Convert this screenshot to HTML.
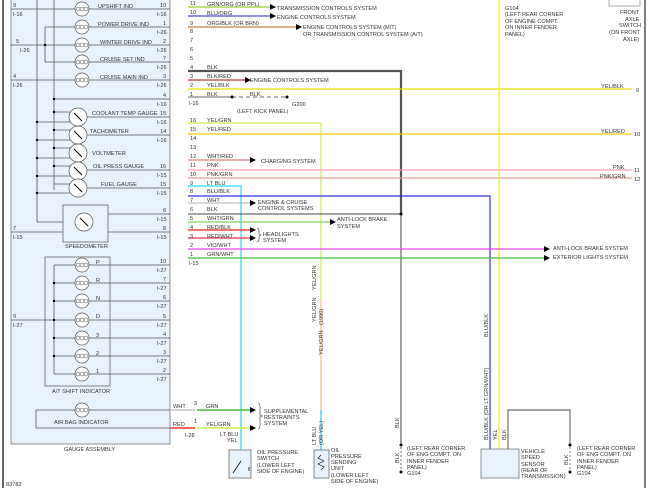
<!DOCTYPE html>
<html><head><meta charset="utf-8"><style>
html,body{margin:0;padding:0;background:#fff;}
svg{display:block;}
text{font-family:"Liberation Sans",sans-serif;font-size:5.6px;fill:#333;}
.n{font-size:5.8px}
</style></head><body>
<svg width="650" height="488" viewBox="0 0 650 488" xmlns="http://www.w3.org/2000/svg">
<defs>
<marker id="ah" markerWidth="6" markerHeight="6" refX="5" refY="3" orient="auto" markerUnits="userSpaceOnUse"><path d="M0,0L6,3L0,6z" fill="#000"/></marker>
<g id="bulb"><circle r="7" fill="#fff" stroke="#555" stroke-width="0.7"/><circle cx="-4" r="2" fill="none" stroke="#555" stroke-width="0.5"/><circle cx="4" r="2" fill="none" stroke="#555" stroke-width="0.5"/><circle r="2" fill="none" stroke="#555" stroke-width="0.5"/></g>
<g id="gauge"><circle r="9" fill="#fff" stroke="#555" stroke-width="0.7"/><line x1="-4" y1="-4" x2="4" y2="4" stroke="#000" stroke-width="1"/></g>
</defs>
<rect width="650" height="488" fill="#fff"/>
<line x1="3" y1="0" x2="3" y2="488" stroke="#000" stroke-width="1.2"/>
<line x1="645" y1="0" x2="645" y2="488" stroke="#555" stroke-width="1.5"/>
<!-- gauge assembly -->
<rect x="11" y="-2" width="159" height="446" fill="#e9f2fb" stroke="#777" stroke-width="0.8"/>
<text x="64" y="451">GAUGE ASSEMBLY</text>
<g stroke="#555" stroke-width="0.8" fill="none">
<line x1="37" y1="0" x2="37" y2="222"/>
<line x1="54" y1="0" x2="54" y2="190"/>
<line x1="45" y1="27" x2="45" y2="62"/>
<line x1="37" y1="222" x2="63" y2="222"/>
<!-- rows -->
<line x1="11" y1="9" x2="170" y2="9"/>
<line x1="45" y1="27" x2="170" y2="27"/>
<line x1="11" y1="45" x2="170" y2="45"/>
<line x1="45" y1="62" x2="170" y2="62"/>
<line x1="11" y1="80" x2="170" y2="80"/>
<line x1="54" y1="99" x2="170" y2="99"/>
<line x1="87" y1="117" x2="170" y2="117"/>
<line x1="87" y1="135" x2="170" y2="135"/>
<line x1="87" y1="170" x2="170" y2="170"/>
<line x1="87" y1="188" x2="170" y2="188"/>
<line x1="108" y1="214" x2="170" y2="214"/>
<line x1="11" y1="232" x2="170" y2="232"/>
<line x1="54" y1="112" x2="72" y2="112"/><line x1="37" y1="122" x2="72" y2="122"/>
<line x1="54" y1="130" x2="72" y2="130"/><line x1="37" y1="140" x2="72" y2="140"/>
<line x1="54" y1="148" x2="72" y2="148"/><line x1="37" y1="158" x2="72" y2="158"/>
<line x1="54" y1="166" x2="72" y2="166"/><line x1="37" y1="176" x2="72" y2="176"/>
<line x1="54" y1="184" x2="72" y2="184"/><line x1="37" y1="193" x2="72" y2="193"/>
<!-- AT -->
<line x1="54" y1="265" x2="54" y2="374"/>
<line x1="54" y1="265" x2="170" y2="265"/><line x1="54" y1="283" x2="170" y2="283"/><line x1="54" y1="301" x2="170" y2="301"/><line x1="11" y1="320" x2="170" y2="320"/><line x1="54" y1="338" x2="170" y2="338"/><line x1="54" y1="356" x2="170" y2="356"/><line x1="54" y1="374" x2="170" y2="374"/>
<!-- airbag -->
<polyline points="195,410 36,410 36,428 195,428"/>
</g>
<g fill="#000">
<circle cx="45" cy="45" r="1.2"/><circle cx="54" cy="99" r="1.2"/><circle cx="54" cy="112" r="1.2"/><circle cx="54" cy="130" r="1.2"/><circle cx="54" cy="148" r="1.2"/><circle cx="54" cy="166" r="1.2"/>
<circle cx="37" cy="122" r="1.2"/><circle cx="37" cy="140" r="1.2"/><circle cx="37" cy="158" r="1.2"/><circle cx="37" cy="176" r="1.2"/><circle cx="37" cy="193" r="1.2"/>
<circle cx="54" cy="283" r="1.2"/><circle cx="54" cy="301" r="1.2"/><circle cx="54" cy="320" r="1.2"/><circle cx="54" cy="338" r="1.2"/><circle cx="54" cy="356" r="1.2"/>
</g>
<use href="#bulb" x="82" y="9"/><use href="#bulb" x="82" y="27"/><use href="#bulb" x="82" y="45"/><use href="#bulb" x="82" y="62"/><use href="#bulb" x="82" y="80"/>
<text x="98" y="8">UPSHIFT IND</text><text x="98" y="26">POWER DRIVE IND</text><text x="100" y="44">WINTER DRIVE IND</text><text x="100" y="61">CRUISE SET IND</text><text x="100" y="79">CRUISE MAIN IND</text>
<use href="#gauge" x="78" y="117"/><use href="#gauge" x="78" y="135"/><use href="#gauge" x="78" y="153"/><use href="#gauge" x="78" y="171"/><use href="#gauge" x="78" y="188"/>
<text x="92" y="115">COOLANT TEMP GAUGE</text><text x="90" y="133">TACHOMETER</text><text x="92" y="155">VOLTMETER</text><text x="93" y="168">OIL PRESS GAUGE</text><text x="101" y="186">FUEL GAUGE</text>
<rect x="63" y="205" width="45" height="37" fill="#e9f2fb" stroke="#555" stroke-width="0.7"/>
<use href="#gauge" x="84" y="222"/>
<text x="65" y="248">SPEEDOMETER</text>
<rect x="45" y="257" width="65" height="129" fill="none" stroke="#555" stroke-width="0.7"/>
<use href="#bulb" x="82" y="265"/><use href="#bulb" x="82" y="283"/><use href="#bulb" x="82" y="301"/><use href="#bulb" x="82" y="320"/><use href="#bulb" x="82" y="338"/><use href="#bulb" x="82" y="356"/><use href="#bulb" x="82" y="374"/>
<text x="96" y="264">P</text><text x="96" y="282">R</text><text x="96" y="300">N</text><text x="96" y="318">D</text><text x="96" y="337">3</text><text x="96" y="355">2</text><text x="96" y="373">1</text>
<text x="52" y="393">A/T SHIFT INDICATOR</text>
<use href="#bulb" x="82" y="410"/>
<text x="54" y="424">AIR BAG INDICATOR</text>
<!-- gauge pins -->
<g class="n">
<text x="160" y="7">10</text><text x="157" y="16">I-16</text>
<text x="163" y="25">1</text><text x="157" y="34">I-26</text>
<text x="163" y="43">2</text><text x="157" y="52">I-26</text>
<text x="163" y="60">7</text><text x="157" y="69">I-26</text>
<text x="163" y="78">3</text><text x="157" y="87">I-26</text>
<text x="163" y="97">4</text><text x="157" y="106">I-16</text>
<text x="160" y="115">15</text><text x="157" y="124">I-16</text>
<text x="160" y="133">14</text><text x="157" y="142">I-16</text>
<text x="160" y="168">16</text><text x="157" y="177">I-15</text>
<text x="160" y="186">15</text><text x="157" y="195">I-15</text>
<text x="163" y="212">6</text><text x="157" y="221">I-15</text>
<text x="163" y="230">8</text><text x="157" y="239">I-15</text>
<text x="160" y="263">10</text><text x="157" y="272">I-27</text>
<text x="163" y="281">7</text><text x="157" y="290">I-27</text>
<text x="163" y="299">6</text><text x="157" y="308">I-27</text>
<text x="163" y="318">5</text><text x="157" y="327">I-27</text>
<text x="163" y="336">4</text><text x="157" y="345">I-27</text>
<text x="163" y="354">3</text><text x="157" y="363">I-27</text>
<text x="163" y="372">2</text><text x="157" y="381">I-27</text>
<text x="13" y="7">9</text><text x="13" y="16">I-16</text>
<text x="16" y="43">5</text><text x="20" y="52">I-26</text>
<text x="13" y="78">4</text><text x="13" y="87">I-26</text>
<text x="13" y="230">7</text><text x="13" y="239">I-15</text>
<text x="13" y="318">9</text><text x="13" y="327">I-27</text>
</g>
<!-- wires middle -->
<g fill="none" stroke-width="1.2">
<line x1="188" y1="7" x2="270" y2="7" stroke="#9acd32"/>
<line x1="188" y1="16" x2="270" y2="16" stroke="#4a4ad8"/>
<line x1="188" y1="27" x2="296" y2="27" stroke="#d08040"/>
<polyline points="188,71 401,71 401,214" stroke="#555" stroke-width="2.2"/>
<line x1="401" y1="214" x2="401" y2="445" stroke="#444" stroke-width="1"/>
<line x1="188" y1="80" x2="245" y2="80" stroke="#b03a3a"/>
<line x1="188" y1="89" x2="632" y2="89" stroke="#e8e000"/>
<line x1="188" y1="97" x2="232" y2="97" stroke="#333" stroke-width="0.8"/>
<line x1="232" y1="97" x2="287" y2="97" stroke="#333" stroke-width="0.8" stroke-dasharray="4,3"/>
<polyline points="188,123 321,123 321,410" stroke="#ccee44"/>
<line x1="321" y1="300" x2="321" y2="410" stroke="#f6c48c"/>
<line x1="321" y1="410" x2="321" y2="452" stroke="#22ccee"/>
<line x1="188" y1="134" x2="632" y2="134" stroke="#ffcc00"/>
<line x1="188" y1="160" x2="250" y2="160" stroke="#d06060" stroke-width="0.9"/>
<line x1="188" y1="170" x2="632" y2="170" stroke="#ffa0b4"/>
<line x1="188" y1="178" x2="632" y2="178" stroke="#e8a090"/>
<polyline points="188,186 241,186 241,452" stroke="#22ddee"/>
<polyline points="188,196 490,196 490,449" stroke="#3333dd"/>
<line x1="499" y1="0" x2="499" y2="449" stroke="#eeee22"/>
<line x1="188" y1="203" x2="250" y2="203" stroke="#999" stroke-width="0.8"/>
<line x1="188" y1="214" x2="401" y2="214" stroke="#444" stroke-width="0.9"/>
<line x1="188" y1="222" x2="330" y2="222" stroke="#88cc66"/>
<line x1="188" y1="230" x2="250" y2="230" stroke="#ee4444" stroke-width="1.6"/>
<line x1="188" y1="238" x2="250" y2="238" stroke="#ee5566" stroke-width="1.6"/>
<line x1="188" y1="249" x2="544" y2="249" stroke="#ee44ee"/>
<line x1="188" y1="258" x2="544" y2="258" stroke="#44bb44"/>
<line x1="170" y1="410" x2="195" y2="410" stroke="#bbb"/>
<line x1="197" y1="410" x2="250" y2="410" stroke="#44bb33" stroke-width="1.6"/>
<line x1="170" y1="428" x2="195" y2="428" stroke="#ee3333" stroke-width="1.6"/>
<line x1="197" y1="428" x2="250" y2="428" stroke="#ccee44" stroke-width="1.6"/>
<polyline points="508,449 508,410 570,410 570,445" stroke="#444" stroke-width="0.9"/>
</g>
<g fill="#000">
<path d="M270,4L276,7L270,10z"/><path d="M270,13L276,16L270,19z"/><path d="M296,24L302,27L296,30z"/>
<path d="M245,77L251,80L245,83z"/><path d="M250,157L256,160L250,163z"/><path d="M250,200L256,203L250,206z"/>
<path d="M330,219L336,222L330,225z"/><path d="M250,227L256,230L250,233z"/><path d="M250,235L256,238L250,241z"/>
<path d="M544,246L550,249L544,252z"/><path d="M544,255L550,258L544,261z"/>
<path d="M250,407L256,410L250,413z"/><path d="M250,425L256,428L250,431z"/>
<circle cx="232" cy="97" r="1.5"/><circle cx="287" cy="97" r="1.5"/><circle cx="401" cy="214" r="1.5"/>
<circle cx="401" cy="445" r="1.5"/><circle cx="401" cy="472" r="1.5"/><circle cx="570" cy="445" r="1.5"/><circle cx="570" cy="472" r="1.5"/>
</g>
<line x1="401" y1="447" x2="401" y2="472" stroke="#333" stroke-width="0.7" stroke-dasharray="2,2"/>
<line x1="570" y1="447" x2="570" y2="472" stroke="#333" stroke-width="0.7" stroke-dasharray="2,2"/>
<!-- middle pins -->
<g class="n">
<text x="190" y="5">11</text><text x="190" y="14">10</text><text x="190" y="25">9</text><text x="190" y="33">8</text><text x="190" y="42">7</text><text x="190" y="51">6</text><text x="190" y="60">5</text><text x="190" y="69">4</text><text x="190" y="78">3</text><text x="190" y="87">2</text><text x="190" y="96">1</text><text x="189" y="105">I-16</text>
<text x="190" y="122">16</text><text x="190" y="131">15</text><text x="190" y="140">14</text><text x="190" y="149">13</text><text x="190" y="158">12</text><text x="190" y="167">11</text><text x="190" y="176">10</text><text x="190" y="185">9</text><text x="190" y="193">8</text><text x="190" y="202">7</text><text x="190" y="211">6</text><text x="190" y="220">5</text><text x="190" y="229">4</text><text x="190" y="238">3</text><text x="190" y="247">2</text><text x="190" y="256">1</text><text x="189" y="265">I-15</text>
</g>
<text x="207" y="6">GRN/ORG (OR PPL)</text><text x="207" y="15">BLU/ORG</text><text x="207" y="25">ORG/BLK (OR BRN)</text>
<text x="207" y="69">BLK</text><text x="207" y="78">BLK/RED</text><text x="207" y="87">YEL/BLK</text><text x="207" y="96">BLK</text><text x="250" y="96">BLK</text>
<text x="292" y="106">G200</text><text x="237" y="113">(LEFT KICK PANEL)</text>
<text x="207" y="122">YEL/GRN</text><text x="207" y="131">YEL/RED</text><text x="207" y="158">WHT/RED</text><text x="207" y="167">PNK</text><text x="207" y="176">PNK/GRN</text><text x="207" y="185">LT BLU</text><text x="207" y="193">BLU/BLK</text><text x="207" y="202">WHT</text><text x="207" y="211">BLK</text><text x="207" y="220">WHT/GRN</text><text x="207" y="229">RED/BLK</text><text x="207" y="238">RED/WHT</text><text x="207" y="247">VIO/WHT</text><text x="207" y="256">GRN/WHT</text>
<text x="277" y="10">TRANSMISSION CONTROLS SYSTEM</text><text x="277" y="19">ENGINE CONTROLS SYSTEM</text>
<text x="303" y="29">ENGINE CONTROLS SYSTEM (M/T)</text><text x="303" y="36">OR TRANSMISSION CONTROL SYSTEM (A/T)</text>
<text x="250" y="82">ENGINE CONTROLS SYSTEM</text><text x="261" y="163">CHARGING SYSTEM</text>
<text x="258" y="204">ENGINE &amp; CRUISE</text><text x="258" y="210">CONTROL SYSTEMS</text>
<text x="337" y="221">ANTI-LOCK BRAKE</text><text x="337" y="228">SYSTEM</text>
<text x="263" y="236">HEADLIGHTS</text><text x="263" y="242">SYSTEM</text>
<path d="M257,228 q2,0 2,3 v3 l2,1 l-2,1 v3 q0,3 -2,3" fill="none" stroke="#333" stroke-width="0.6"/>
<text x="553" y="250">ANTI-LOCK BRAKE SYSTEM</text><text x="553" y="259">EXTERIOR LIGHTS SYSTEM</text>
<text x="601" y="88">YEL/BLK</text><text x="636" y="92">9</text>
<text x="601" y="133">YEL/RED</text><text x="634" y="136">10</text>
<text x="613" y="169">PNK</text><text x="634" y="172">11</text>
<text x="600" y="178">PNK/GRN</text><text x="634" y="181">12</text>
<text x="505" y="10">G104</text><text x="505" y="16">(LEFT REAR CORNER</text><text x="505" y="23">OF ENGINE COMPT.</text><text x="505" y="29">ON INNER FENDER</text><text x="505" y="36">PANEL)</text>
<rect x="609" y="-2" width="31" height="8" fill="#fff" stroke="#777" stroke-width="0.6"/>
<text x="620" y="14">FRONT</text><text x="625" y="21">AXLE</text><text x="619" y="27">SWITCH</text><text x="609" y="34">(ON FRONT</text><text x="623" y="41">AXLE)</text>
<!-- bottom -->
<text x="173" y="408">WHT</text><text x="173" y="426">RED</text><text x="185" y="437">I-28</text><text x="194" y="405">3</text><text x="194" y="423">1</text>
<text x="206" y="408">GRN</text><text x="206" y="426">YEL/GRN</text>
<text x="264" y="413">SUPPLEMENTAL</text><text x="264" y="419">RESTRAINTS</text><text x="264" y="425">SYSTEM</text>
<path d="M258,403 q2,0 2,4 v8 l2,1 l-2,1 v8 q0,4 -2,4" fill="none" stroke="#333" stroke-width="0.6"/>
<text x="220" y="436">LT BLU</text><text x="227" y="442">YEL</text>
<rect x="229" y="450" width="22" height="28" fill="#e9f2fb" stroke="#555" stroke-width="0.7"/>
<path d="M233,473 l8,-12 M249,471 v-4" stroke="#000" stroke-width="0.8"/>
<text x="257" y="454">OIL PRESSURE</text><text x="257" y="460">SWITCH</text><text x="257" y="467">(LOWER LEFT</text><text x="257" y="473">SIDE OF ENGINE)</text>
<rect x="314" y="450" width="15" height="28" fill="#e9f2fb" stroke="#555" stroke-width="0.7"/>
<path d="M321,455 l-3,3 l6,3 l-6,3 l6,3 l-3,3" fill="none" stroke="#000" stroke-width="0.6"/>
<text x="331" y="452">OIL</text><text x="331" y="458">PRESSURE</text><text x="331" y="464">SENDING</text><text x="331" y="470">UNIT</text><text x="331" y="477">(LOWER LEFT</text><text x="331" y="483">SIDE OF ENGINE)</text>
<text transform="translate(316,445) rotate(-90)">LT BLU</text><text transform="translate(323,445) rotate(-90)">(OR YEL)</text>
<text transform="translate(316,290) rotate(-90)">YEL/GRN</text><text transform="translate(316,322) rotate(-90)">YEL/GRN</text>
<text transform="translate(323,355) rotate(-90)">YEL/GRN</text><text transform="translate(323,325) rotate(-90)">(1990)</text>
<text transform="translate(399,428) rotate(-90)">BLK</text><text transform="translate(399,463) rotate(-90)">BLK</text>
<text x="407" y="450">(LEFT REAR CORNER</text><text x="407" y="456">OF ENG COMPT. ON</text><text x="407" y="463">INNER FENDER</text><text x="407" y="469">PANEL)</text><text x="407" y="475">G104</text>
<text transform="translate(488,337) rotate(-90)">BLU/BLK</text><text transform="translate(488,440) rotate(-90)">BLU/BLK (OR LT GRN/WHT)</text>
<text transform="translate(497,440) rotate(-90)">YEL</text><text transform="translate(506,440) rotate(-90)">BLK</text>
<rect x="481" y="449" width="38" height="29" fill="#e9f2fb" stroke="#666" stroke-width="0.7"/>
<text x="521" y="453">VEHICLE</text><text x="521" y="459">SPEED</text><text x="521" y="466">SENSOR</text><text x="521" y="472">(REAR OF</text><text x="521" y="478">TRANSMISSION)</text>
<text transform="translate(568,465) rotate(-90)">BLK</text>
<text x="577" y="450">(LEFT REAR CORNER</text><text x="577" y="456">OF ENG COMPT. ON</text><text x="577" y="463">INNER FENDER</text><text x="577" y="469">PANEL)</text><text x="577" y="475">G104</text>
<text x="6" y="486">83782</text>
</svg>
</body></html>
